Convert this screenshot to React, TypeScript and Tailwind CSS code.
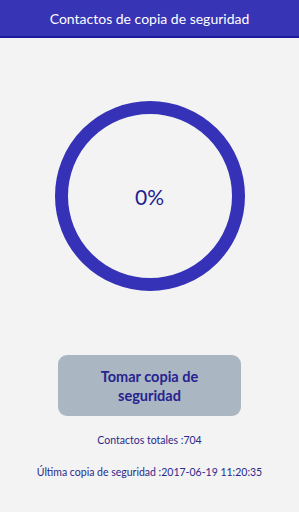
export default function App() {
  return (
    <div
      className="w-[299px] h-[512px] bg-[#f3f3f3] flex flex-col items-center overflow-hidden"
      style={{ fontFamily: "Lato, 'Open Sans', sans-serif" }}
    >
      <div className="w-full h-[38px] bg-[#3734b6] border-b-2 border-[#1c1a9c] flex items-center justify-center pt-px">
        <span className="text-white text-[14px] leading-none">Contactos de copia de seguridad</span>
      </div>

      <div className="mt-[63px] w-[190px] h-[190px] rounded-full border-[13px] border-[#3532b8] flex items-center justify-center">
        <span className="text-[#221e90] text-[21px] leading-none">0%</span>
      </div>

      <button
        type="button"
        className="mt-[64px] w-[183px] h-[61px] rounded-[9px] bg-[#aab6c2] text-[#27238f] font-bold text-[14.5px] leading-[19px] px-6"
      >
        Tomar copia de seguridad
      </button>

      <p className="mt-[19px] text-[#2b2a8a] text-[10.5px] leading-none">Contactos totales :704</p>
      <p className="mt-[21px] text-[#2b2a8a] text-[10.5px] leading-none">Última copia de seguridad :2017-06-19 11:20:35</p>
    </div>
  )
}
